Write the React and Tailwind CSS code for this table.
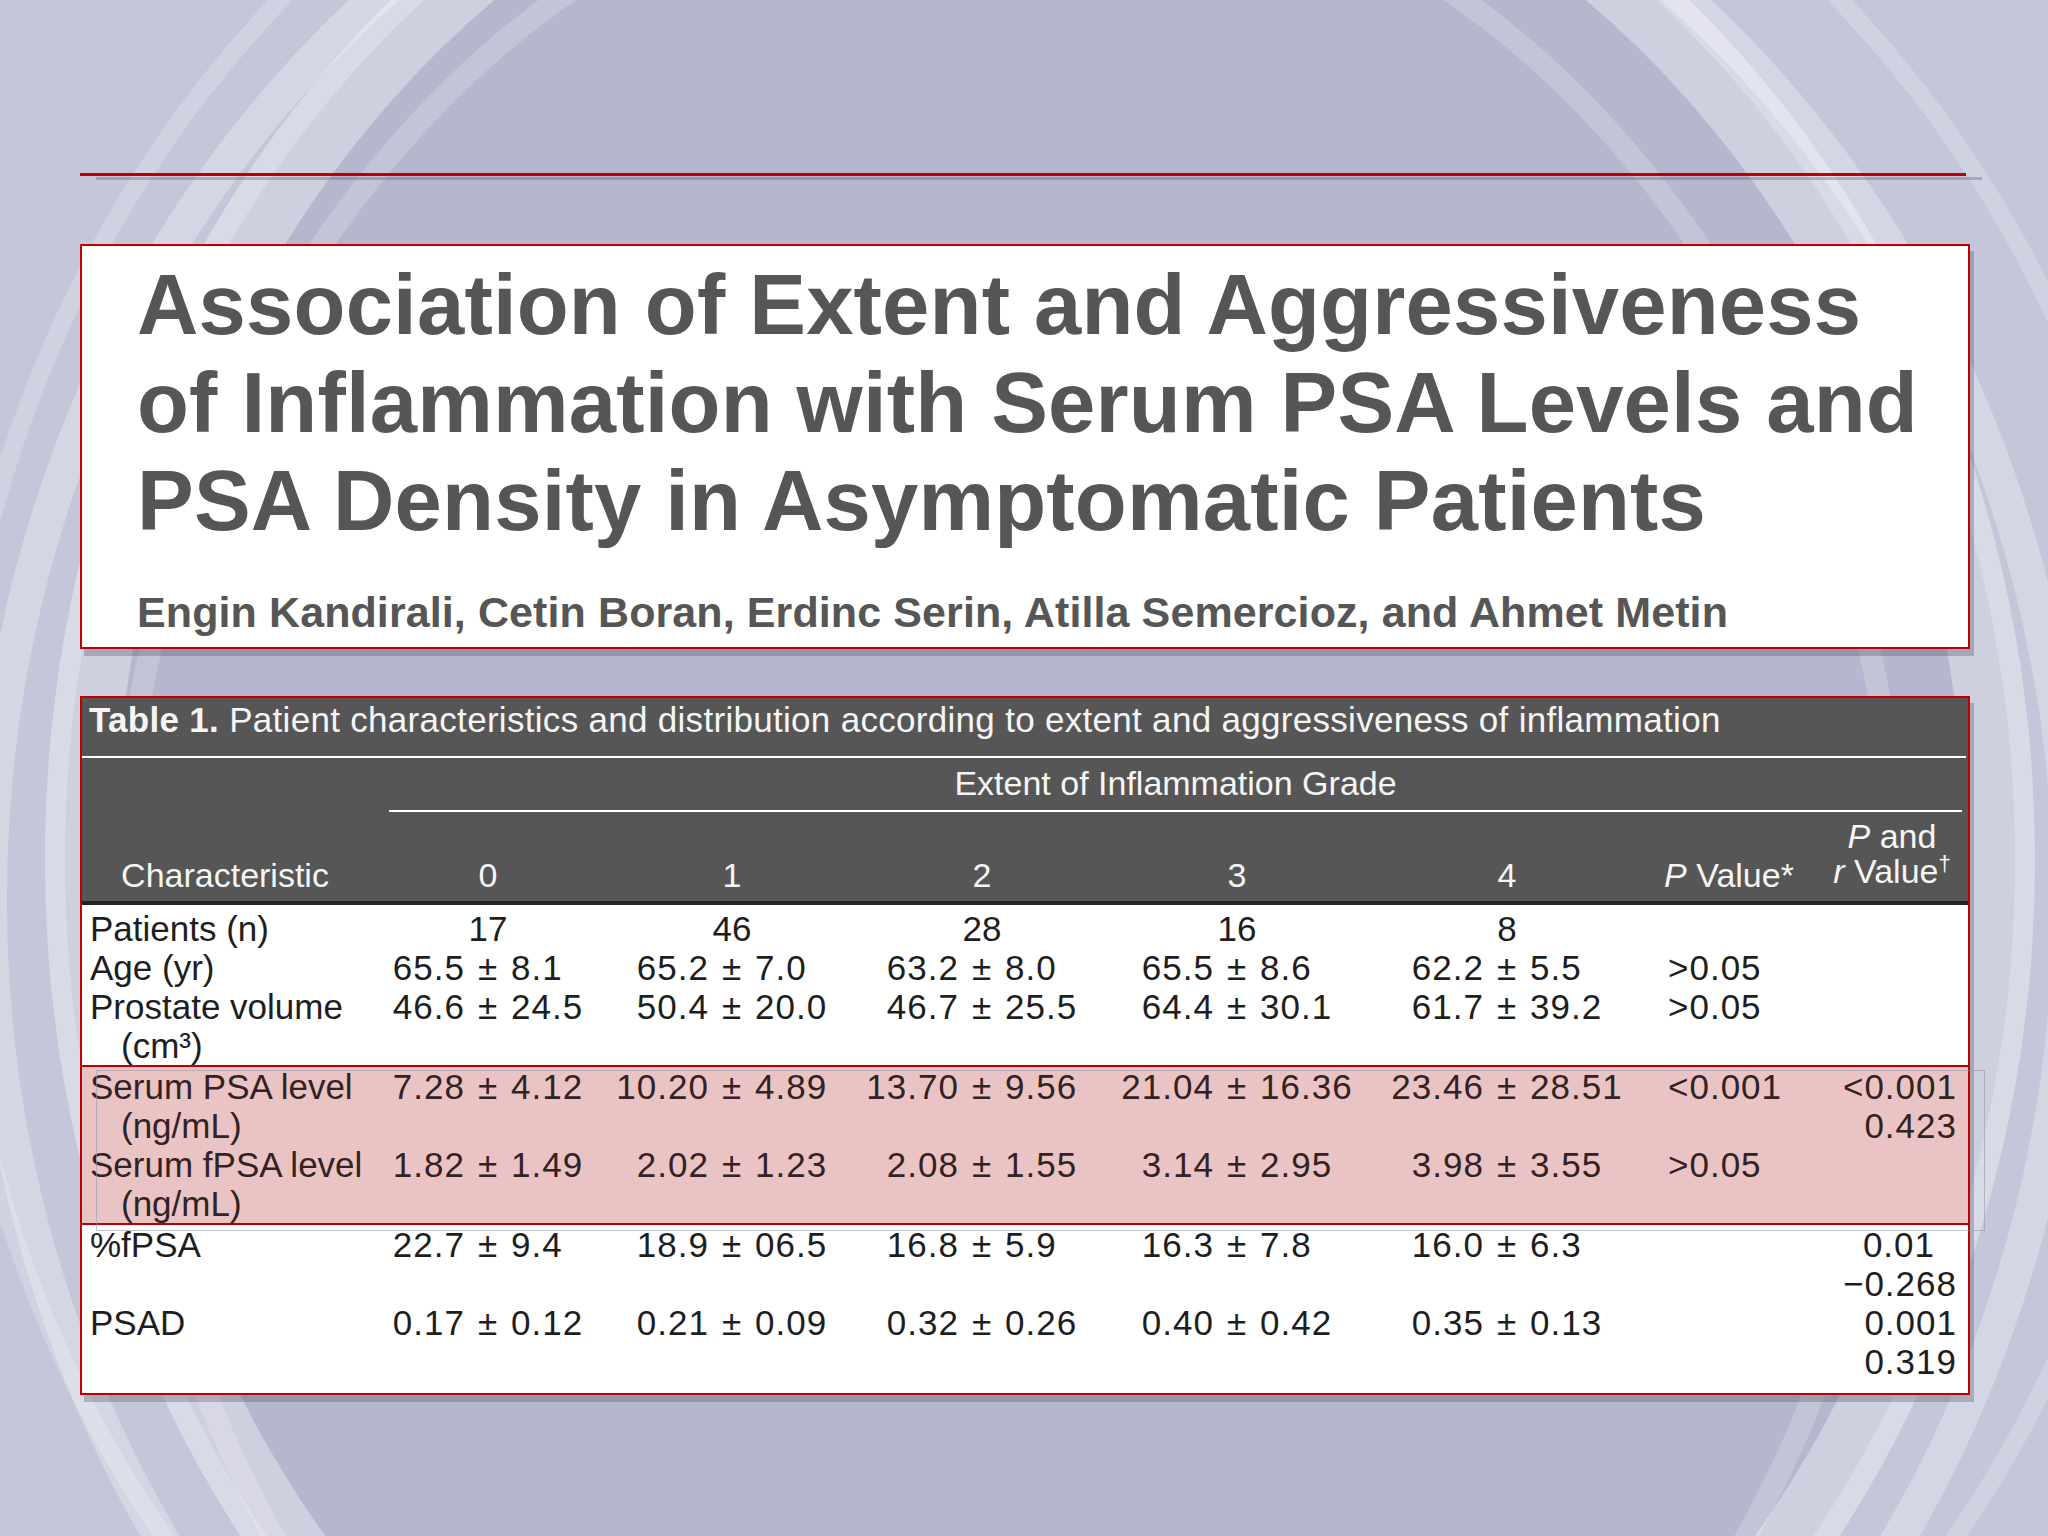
const FONT = "font-['Liberation_Sans',Arial,sans-serif]"

const GRID = 'grid grid-cols-[286px_240px_248px_252px_258px_282px_162px_1fr]'

function PM({ v }) {
  if (!Array.isArray(v)) return <div className="text-center">{v}</div>
  return (
    <div className="grid grid-cols-[1fr_auto_1fr] whitespace-nowrap tracking-[1px]">
      <span className="text-right">{v[0]}</span>
      <span className="px-[13px]">±</span>
      <span>{v[1]}</span>
    </div>
  )
}

function Row({ label, sub, cells, p, r, rPad }) {
  return (
    <div className={`${GRID} items-start`}>
      <div className="pl-[8px] whitespace-nowrap">
        <div>{label}</div>
        {sub && <div className="pl-[31px]">{sub}</div>}
      </div>
      {cells.map((c, i) => <PM key={i} v={c} />)}
      <div className="pl-[20px] whitespace-nowrap tracking-[1px]">{p}</div>
      <div className="pr-[11px] text-right whitespace-nowrap tracking-[1px]">
        {(r || []).map((x, i) => (
          <div key={i} className={rPad && i === 0 ? 'pr-[22px]' : ''}>{x}</div>
        ))}
      </div>
    </div>
  )
}

function Background() {
  return (
    <svg className="absolute inset-0" width="2048" height="1536" viewBox="0 0 2048 1536">
      <rect width="2048" height="1536" fill="#c4c7d9" />
      <ellipse cx="1040" cy="860" rx="975" ry="1110" fill="#b6b7ce" />
      <ellipse cx="1040" cy="860" rx="960" ry="1100" fill="none" stroke="#ffffff" strokeOpacity="0.35" strokeWidth="70" />
      <ellipse cx="1030" cy="900" rx="1040" ry="1160" fill="none" stroke="#ffffff" strokeOpacity="0.28" strokeWidth="34" />
      <ellipse cx="1010" cy="930" rx="890" ry="1080" fill="none" stroke="#ffffff" strokeOpacity="0.18" strokeWidth="22" />
      <ellipse cx="1060" cy="840" rx="1110" ry="1180" fill="none" stroke="#ffffff" strokeOpacity="0.2" strokeWidth="18" />
    </svg>
  )
}

export default function App() {
  return (
    <div className={`relative w-[2048px] h-[1536px] overflow-hidden ${FONT}`}>
      <Background />
      <div className="relative px-[80px] pt-[173px]">
        {/* top rule */}
        <div className="w-[1886px] h-[3px] bg-[#c00000] shadow-[16px_4px_0_rgba(90,90,110,0.35)]" />

        {/* title card */}
        <div className="mt-[68px] w-[1890px] border-2 border-[#c00000] bg-white shadow-[4px_7px_0_rgba(70,70,95,0.3)] pl-[55px] pt-[10px] pb-[10px] text-[#565656] font-bold">
          <h1 className="text-[85px] leading-[98px] tracking-[0.2px]">
            Association of Extent and Aggressiveness<br />
            of Inflammation with Serum PSA Levels and<br />
            PSA Density in Asymptomatic Patients
          </h1>
          <p className="mt-[37px] text-[43px] leading-[50px] tracking-[0.1px]">
            Engin Kandirali, Cetin Boran, Erdinc Serin, Atilla Semercioz, and Ahmet Metin
          </p>
        </div>

        {/* table card */}
        <div className="mt-[47px] w-[1890px] border-2 border-[#c00000] bg-white shadow-[4px_7px_0_rgba(70,70,95,0.3)]">
          <div className="bg-[#565656] text-[#f5f5f5]">
            <div className="h-[58px] pt-[2px] pl-[7px] text-[35px] leading-[40px] tracking-[0.3px] whitespace-nowrap">
              <b>Table 1.</b> Patient characteristics and distribution according to extent and aggressiveness of inflammation
            </div>
            <div className="h-[2px] bg-white mr-[2px]" />
            <div className="ml-[307px] mr-[6px] pt-[5px] pb-[7px] border-b-2 border-white text-center text-[34px] leading-[40px]">
              Extent of Inflammation Grade
            </div>
            <div className={`${GRID} items-end pt-[7px] pb-[8px] text-[34px] leading-[35px]`}>
              <div className="text-center">Characteristic</div>
              <div className="text-center">0</div>
              <div className="text-center">1</div>
              <div className="text-center">2</div>
              <div className="text-center">3</div>
              <div className="text-center">4</div>
              <div className="text-center whitespace-nowrap"><i>P</i> Value*</div>
              <div className="text-center pl-[6px] whitespace-nowrap">
                <div><i>P</i> and</div>
                <div><i>r</i> Value<span className="relative -top-[12px] text-[22px]">†</span></div>
              </div>
            </div>
            <div className="h-[4px] bg-[#222]" />
          </div>

          <div className="pt-[4px] pb-[12px] text-[35px] leading-[39px] text-[#1e1e1e]">
            <Row label="Patients (n)" cells={['17', '46', '28', '16', '8']} />
            <Row label="Age (yr)" cells={[['65.5', '8.1'], ['65.2', '7.0'], ['63.2', '8.0'], ['65.5', '8.6'], ['62.2', '5.5']]} p=">0.05" />
            <Row label="Prostate volume" sub="(cm³)" cells={[['46.6', '24.5'], ['50.4', '20.0'], ['46.7', '25.5'], ['64.4', '30.1'], ['61.7', '39.2']]} p=">0.05" />

            <div className="relative border-y-2 border-[#c00000] bg-[#eac4c5] text-[#332222]">
              <div className="absolute left-[14px] top-[3px] -right-[17px] -bottom-[8px] border border-[#9a9aa8]/60" />
              <Row label="Serum PSA level" sub="(ng/mL)" cells={[['7.28', '4.12'], ['10.20', '4.89'], ['13.70', '9.56'], ['21.04', '16.36'], ['23.46', '28.51']]} p="<0.001" r={['<0.001', '0.423']} />
              <Row label="Serum fPSA level" sub="(ng/mL)" cells={[['1.82', '1.49'], ['2.02', '1.23'], ['2.08', '1.55'], ['3.14', '2.95'], ['3.98', '3.55']]} p=">0.05" />
            </div>

            <Row label="%fPSA" cells={[['22.7', '9.4'], ['18.9', '06.5'], ['16.8', '5.9'], ['16.3', '7.8'], ['16.0', '6.3']]} r={['0.01', '−0.268']} rPad />
            <Row label="PSAD" cells={[['0.17', '0.12'], ['0.21', '0.09'], ['0.32', '0.26'], ['0.40', '0.42'], ['0.35', '0.13']]} r={['0.001', '0.319']} />
          </div>
        </div>
      </div>
    </div>
  )
}
